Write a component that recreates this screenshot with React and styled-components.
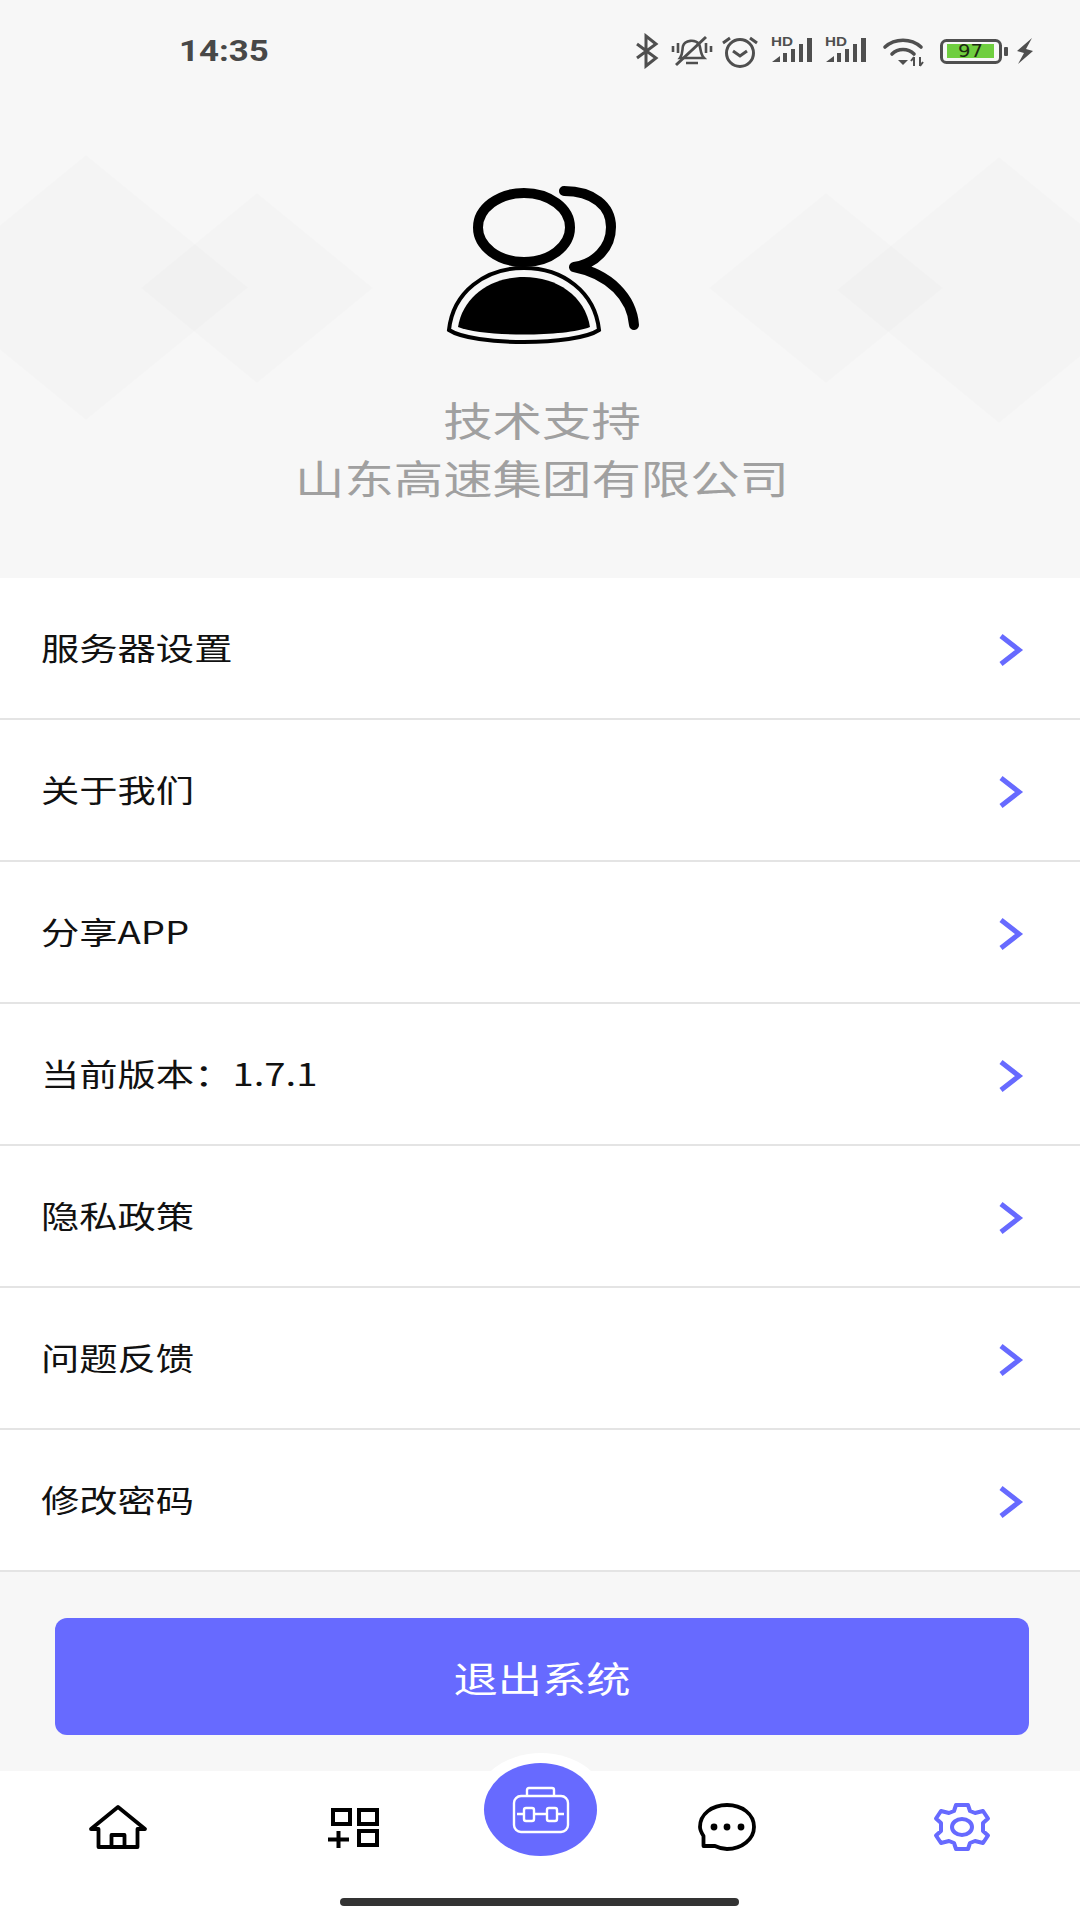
import styled, { createGlobalStyle } from "styled-components";

const GlobalStyle = createGlobalStyle`
  html, body {
    margin: 0;
    padding: 0;
    background: #f7f7f7;
    font-family: "Liberation Sans", "Noto Sans CJK SC", sans-serif;
  }
`;

const BLUE = "#676aff";

const menuItems = [
  "服务器设置",
  "关于我们",
  "分享APP",
  "当前版本：1.7.1",
  "隐私政策",
  "问题反馈",
  "修改密码",
];

const Chevron = () => (
  <svg width="28" height="34" viewBox="0 0 28 34" fill="none">
    <path d="M4 3 L22 17 L4 31" stroke={BLUE} strokeWidth="5" />
  </svg>
);

const StatusIcons = () => (
  <svg width="410" height="36" viewBox="0 0 410 36">
    <g fill="none" stroke="#4f4f4f" strokeWidth="3">
      <path d="M7 11 L26 25 L16 33 V3 L26 11 L7 25" />
      <path d="M50 25 C53 21 52 17 53 13 C55 7 65 6 69 11 C71 15 70 21 74 25 Z M56 30 H68 M48 10 V20 M43 13 V19 M76 10 V20 M81 13 V19" strokeWidth="2.6" />
      <path d="M46 32 L76 4" />
      <circle cx="110" cy="20" r="13.5" />
      <path d="M103 18 L110 23 L117 18 M100 5 L93 10 M120 5 L127 10" />
    </g>
    <g fill="#4f4f4f">
      <text x="141" y="13" fontSize="13" fontWeight="700" fontFamily="Liberation Sans" textLength="22" lengthAdjust="spacingAndGlyphs">HD</text>
      <path d="M142 29 L150 23 V29 Z M153 20 H157 V29 H153 Z M161 16 H165 V29 H161 Z M169 11 H173 V29 H169 Z M177 5 H182 V29 H177 Z" />
      <text x="195" y="13" fontSize="13" fontWeight="700" fontFamily="Liberation Sans" textLength="22" lengthAdjust="spacingAndGlyphs">HD</text>
      <path d="M196 29 L204 23 V29 Z M207 20 H211 V29 H207 Z M215 16 H219 V29 H215 Z M223 11 H227 V29 H223 Z M231 5 H236 V29 H231 Z" />
      <path d="M268 27 L278 27 L273 32 Z" />
      <path d="M284 24 V33 M284 24 L281 28 M290 24 V33 M290 33 L293 29" stroke="#4f4f4f" strokeWidth="2" fill="none" />
    </g>
    <g fill="none" stroke="#4f4f4f" strokeWidth="3.6" strokeLinecap="round">
      <path d="M255 14 C265 5 281 5 291 14" />
      <path d="M262 21 C268 15 278 15 284 21" />
    </g>
    <rect x="311.5" y="7.5" width="59" height="22" rx="5" fill="none" stroke="#4f4f4f" strokeWidth="3" />
    <rect x="317" y="11" width="47" height="14" fill="#6fce3f" />
    <text x="328" y="24" fontSize="17" fontFamily="DejaVu Sans" fill="#1c2a12" textLength="25" lengthAdjust="spacingAndGlyphs">97</text>
    <rect x="374" y="14" width="4" height="9" rx="1" fill="#4f4f4f" />
    <path d="M402 5 L387 18 L394 20 L388 31 L403 18 L396 16 Z" fill="#4f4f4f" />
  </svg>
);

const PersonIcon = () => (
  <svg width="195" height="160" viewBox="0 0 195 160" fill="none">
    <ellipse cx="79" cy="41.5" rx="46" ry="34.5" stroke="#000" strokeWidth="10" />
    <path d="M4 144 C8 106 40 82 79 82 C118 82 150 106 154 144 C130 160 28 160 4 144 Z" stroke="#000" strokeWidth="4" fill="#f7f7f7" />
    <path d="M13 141 C18 110 46 91 79 91 C112 91 140 110 145 141 C120 151 38 151 13 141 Z" fill="#000" />
    <path d="M119 5 C148 5 166 20 166 41 C166 62 150 78 129 81 C165 88 187 112 189 139" stroke="#000" strokeWidth="10" strokeLinecap="round" strokeLinejoin="round" />
  </svg>
);

const HomeIcon = () => (
  <svg width="60" height="52" viewBox="0 0 60 52" fill="none" stroke="#000" strokeWidth="3.8" strokeLinejoin="round">
    <path d="M10.5 46 V28 H3 L30 6 L57 28 H49.5 V46 Z" />
    <path d="M23.5 46 V34 H36.5 V46" />
  </svg>
);

const AppsIcon = () => (
  <svg width="52" height="52" viewBox="0 0 52 52" fill="none" stroke="#000" strokeWidth="4">
    <rect x="5" y="9" width="17" height="14" />
    <rect x="31" y="9" width="18" height="14" />
    <rect x="31" y="30" width="18" height="14" />
    <path d="M0 38.5 H21 M10.5 30 V47" />
  </svg>
);

const ToolboxIcon = () => (
  <svg width="58" height="48" viewBox="0 0 58 48" fill="none" stroke="#fff" strokeWidth="2.4">
    <rect x="2" y="10" width="54" height="36" rx="7" />
    <path d="M15 10 V4 Q15 2 17 2 H40 Q42 2 42 4 V10" />
    <path d="M5 28 H12 M22 28 H35 M45 28 H52" />
    <rect x="12" y="22" width="10" height="13" rx="2" />
    <rect x="35" y="22" width="10" height="13" rx="2" />
  </svg>
);

const ChatIcon = () => (
  <svg width="60" height="52" viewBox="0 0 60 52" fill="none">
    <path d="M7.5 45 V35 C5 31 4 28 4 26 C4 13 16 4 31 4 C46 4 58 13 58 26 C58 38 46 48 31 48 C26 48 23 47 19 45 Z" stroke="#000" strokeWidth="3.8" strokeLinejoin="round" />
    <circle cx="18" cy="26" r="3.4" fill="#000" />
    <circle cx="31" cy="26" r="3.4" fill="#000" />
    <circle cx="45" cy="26" r="3.4" fill="#000" />
  </svg>
);

const GearIcon = () => (
  <svg width="58" height="52" viewBox="0 0 58 52" fill="none" stroke={BLUE} strokeWidth="4" strokeLinejoin="round">
    <path d="M23 4 H35 L37 10 L42 12 L50 10 L55 17.5 L50 22 V30 L55 34.5 L50 42 L42 40 L37 42 L35 48 H23 L21 42 L16 40 L8 42 L3 34.5 L8 30 V22 L3 17.5 L8 10 L16 12 L21 10 Z" />
    <ellipse cx="29" cy="26" rx="10" ry="8" />
  </svg>
);

const Page = styled.div`
  width: 1080px;
  height: 1920px;
  background: #f7f7f7;
  display: flex;
  flex-direction: column;
  overflow: hidden;
`;

const Hero = styled.header`
  position: relative;
  height: 578px;
  flex-shrink: 0;
  display: flex;
  flex-direction: column;
  align-items: center;
  overflow: hidden;
`;

const Diamond = styled.div`
  position: absolute;
  left: ${(p) => p.$x}px;
  top: ${(p) => p.$y}px;
  width: ${(p) => p.$w}px;
  height: ${(p) => p.$h}px;
  background: rgba(0, 0, 0, 0.012);
  clip-path: polygon(50% 0, 100% 50%, 50% 100%, 0 50%);
`;

const StatusBar = styled.div`
  position: relative;
  height: 102px;
  width: 100%;
  display: flex;
  align-items: center;
  justify-content: space-between;
  padding: 0 40px 0 179px;
  box-sizing: border-box;
`;

const Clock = styled.span`
  display: inline-block;
  font-family: Roboto, sans-serif;
  font-weight: 700;
  font-size: 29px;
  color: #484848;
  transform: scaleX(1.2);
  transform-origin: left center;
`;

const Avatar = styled.div`
  position: relative;
  margin-top: 84px;
  margin-left: 5px;
  height: 160px;
`;

const HeroText = styled.div`
  position: relative;
  margin-top: 44px;
  margin-left: 3px;
  text-align: center;
  font-size: 40px;
  line-height: 58px;
  color: #a0a0a0;
  font-family: "Noto Sans CJK SC", sans-serif;
  font-weight: 400;
  transform: scaleX(1.235);
`;

const Menu = styled.ul`
  list-style: none;
  margin: 0;
  padding: 0;
  background: #fff;
`;

const Row = styled.li`
  height: 142px;
  box-sizing: border-box;
  border-bottom: 2px solid #e4e4e4;
  padding: 0 55px 0 41px;
  display: flex;
  align-items: center;
  justify-content: space-between;

  svg {
    margin-top: 3px;
  }
`;

const RowLabel = styled.span`
  display: inline-block;
  margin-bottom: 3px;
  font-size: 31px;
  font-family: "Noto Sans CJK SC", sans-serif;
  color: #111;
  transform: scaleX(1.235);
  transform-origin: left center;
`;

const Footer = styled.div`
  flex: 1;
  padding: 46px 51px 0 55px;
`;

const Logout = styled.button`
  width: 100%;
  height: 117px;
  border: 0;
  border-radius: 12px;
  background: ${BLUE};
  padding: 0;
`;

const LogoutLabel = styled.span`
  display: inline-block;
  color: #fff;
  font-size: 36px;
  font-family: "Noto Sans CJK SC", sans-serif;
  transform: scaleX(1.23);
`;

const TabBar = styled.nav`
  position: relative;
  height: 149px;
  background: #fff;
  display: grid;
  grid-template-columns: 236px 236px 136px 236px 236px;
  padding-top: 30px;
  box-sizing: border-box;
`;

const Tab = styled.div`
  display: flex;
  justify-content: center;
  align-items: flex-start;
`;

const CenterHalo = styled.div`
  position: absolute;
  left: 475px;
  top: -18px;
  width: 132px;
  height: 102px;
  border-radius: 50%;
  background: #fff;
`;

const CenterButton = styled.div`
  position: absolute;
  left: 484px;
  top: -8px;
  width: 113px;
  height: 93px;
  border-radius: 50%;
  background: ${BLUE};
  display: flex;
  align-items: center;
  justify-content: center;
`;

const HomeBar = styled.div`
  position: absolute;
  left: 340px;
  bottom: 14px;
  width: 399px;
  height: 8px;
  border-radius: 4px;
  background: #333;
`;

export default function App() {
  return (
    <Page>
      <GlobalStyle />
      <Hero>
        <Diamond $x={-76} $y={155} $w={324} $h={265} />
        <Diamond $x={141} $y={193} $w={232} $h={190} />
        <Diamond $x={709} $y={193} $w={234} $h={190} />
        <Diamond $x={837} $y={157} $w={324} $h={266} />
        <StatusBar>
          <Clock>14:35</Clock>
          <StatusIcons />
        </StatusBar>
        <Avatar>
          <PersonIcon />
        </Avatar>
        <HeroText>
          技术支持
          <br />
          山东高速集团有限公司
        </HeroText>
      </Hero>
      <Menu>
        {menuItems.map((label) => (
          <Row key={label}>
            <RowLabel>{label}</RowLabel>
            <Chevron />
          </Row>
        ))}
      </Menu>
      <Footer>
        <Logout>
          <LogoutLabel>退出系统</LogoutLabel>
        </Logout>
      </Footer>
      <TabBar>
        <CenterHalo />
        <Tab>
          <HomeIcon />
        </Tab>
        <Tab>
          <AppsIcon />
        </Tab>
        <div />
        <Tab>
          <ChatIcon />
        </Tab>
        <Tab>
          <GearIcon />
        </Tab>
        <CenterButton>
          <ToolboxIcon />
        </CenterButton>
        <HomeBar />
      </TabBar>
    </Page>
  );
}
